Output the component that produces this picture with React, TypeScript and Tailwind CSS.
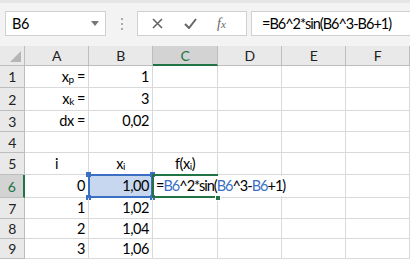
import React from 'react';

const cols = ['A', 'B', 'C', 'D', 'E', 'F'];
const rowHeights = ['h-[22px]', 'h-[23px]', 'h-[21px]', 'h-[21px]', 'h-[22px]', 'h-[23px]', 'h-[21px]', 'h-[20px]', 'h-[20px]'];

function Sub({ base, sub }: { base: string; sub: string }) {
    return (
        <span>
            {base}
            <sub className="text-[10px] relative top-[1px]">{sub}</sub>
        </span>
    );
}

// cell contents keyed by "row-col"
const cells: Record<string, { v: React.ReactNode; align: 'r' | 'c' }> = {
    '1-A': { v: <><Sub base="x" sub="p" />{'\u00a0'}=</>, align: 'r' },
    '1-B': { v: '1', align: 'r' },
    '2-A': { v: <><Sub base="x" sub="k" />{'\u00a0'}=</>, align: 'r' },
    '2-B': { v: '3', align: 'r' },
    '3-A': { v: 'dx =', align: 'r' },
    '3-B': { v: '0,02', align: 'r' },
    '5-A': { v: 'i', align: 'c' },
    '5-B': { v: <Sub base="x" sub="i" />, align: 'c' },
    '5-C': { v: <>f(<Sub base="x" sub="i" />)</>, align: 'c' },
    '6-A': { v: '0', align: 'r' },
    '6-B': { v: '1,00', align: 'r' },
    '7-A': { v: '1', align: 'r' },
    '7-B': { v: '1,02', align: 'r' },
    '8-A': { v: '2', align: 'r' },
    '8-B': { v: '1,04', align: 'r' },
    '9-A': { v: '3', align: 'r' },
    '9-B': { v: '1,06', align: 'r' },
};

function Formula() {
    const blue = 'text-[#3a6fc4]';
    return (
        <span className="whitespace-nowrap tracking-[-1px]">
            =<span className={blue}>B6</span>^2*sin(<span className={blue}>B6</span>^3-<span className={blue}>B6</span>+1)
        </span>
    );
}

function Handle({ className }: { className: string }) {
    return <div className={`absolute w-[5px] h-[5px] bg-[#3a6fc4] ${className}`} />;
}

export default function App() {
    return (
        <div className="w-[410px] h-[259px] overflow-hidden bg-white text-[14.5px] tracking-[-0.45px] text-black" style={{ fontFamily: 'Lato, "Liberation Sans", sans-serif' }}>
            {/* Formula bar */}
            <div className="h-[46px] bg-[#f3f3f3] border-t-[3px] border-[#e6e6e6] flex items-start pt-[8px] pl-[5px]">
                <div className="w-[101px] h-[25px] bg-white border border-[#d0d0d0] flex items-center justify-between pl-[6px] pr-[6px]">
                    <span>B6</span>
                    <svg width="8" height="5" viewBox="0 0 8 5"><path d="M0 0h8L4 5z" fill="#777" /></svg>
                </div>
                <div className="w-[31px] h-[25px] flex flex-col items-center justify-center gap-[3px]">
                    <div className="w-[2px] h-[2px] bg-[#aaa]" />
                    <div className="w-[2px] h-[2px] bg-[#aaa]" />
                    <div className="w-[2px] h-[2px] bg-[#aaa]" />
                </div>
                <div className="w-[110px] h-[25px] bg-white border border-[#d0d0d0] flex items-center">
                    <svg className="ml-[14px]" width="11" height="11" viewBox="0 0 11 11"><path d="M1 1l9 9M10 1l-9 9" stroke="#666" strokeWidth="1.6" /></svg>
                    <svg className="ml-[21px]" width="13" height="11" viewBox="0 0 13 11"><path d="M1 6l4 4 7-9" stroke="#666" strokeWidth="2" fill="none" /></svg>
                    <span className="ml-[20px] italic text-[#666] text-[14px] tracking-normal" style={{ fontFamily: '"Liberation Serif", serif' }}>f<span className="text-[11px]">x</span></span>
                </div>
                <div className="ml-[4px] flex-1 h-[25px] bg-white border border-[#d0d0d0] border-r-0 flex items-center pl-[10px] overflow-hidden">
                    <span className="whitespace-nowrap tracking-[-1px]">=B6^2*sin(B6^3-B6+1)</span>
                </div>
            </div>

            {/* Sheet */}
            <div className="grid grid-cols-[25px_64px_64px_65px_64px_64px_64px]">
                {/* header row */}
                <div className="h-[20px] bg-[#e9e9e9] border-r border-b border-[#bdbdbd] relative">
                    <svg className="absolute right-[3px] bottom-[3px]" width="11" height="11" viewBox="0 0 11 11"><path d="M11 0v11H0z" fill="#b5b5b5" /></svg>
                </div>
                {cols.map((c) => (
                    <div
                        key={c}
                        className={
                            c === 'C'
                                ? 'h-[20px] bg-[#d3d3d3] border-r border-[#bdbdbd] border-b-2 border-b-[#217346] flex items-center justify-center text-[14px] text-[#217346]'
                                : 'h-[20px] bg-[#e9e9e9] border-r border-b border-[#bdbdbd] flex items-center justify-center text-[14px] text-[#222]'
                        }
                    >
                        {c}
                    </div>
                ))}

                {rowHeights.map((h, i) => {
                    const r = i + 1;
                    return (
                        <React.Fragment key={r}>
                            <div
                                className={
                                    r === 6
                                        ? `${h} bg-[#d3d3d3] border-b border-[#bdbdbd] border-r-2 border-r-[#217346] flex items-center justify-center text-[14px] text-[#217346]`
                                        : `${h} bg-[#e9e9e9] border-r border-b border-[#bdbdbd] flex items-center justify-center text-[14px] text-[#222]`
                                }
                            >
                                {r}
                            </div>
                            {cols.map((c) => {
                                const cell = cells[`${r}-${c}`];
                                const isB6 = r === 6 && c === 'B';
                                const isC6 = r === 6 && c === 'C';
                                return (
                                    <div
                                        key={c}
                                        className={`${h} relative border-r border-b border-[#d9d9d9] flex items-center px-[3px] ${
                                            cell?.align === 'c' ? 'justify-center' : 'justify-end'
                                        } ${isB6 ? 'bg-[#c6d7ef]' : ''} ${isC6 ? 'z-10' : ''}`}
                                    >
                                        {cell?.v}
                                        {isB6 && (
                                            <>
                                                <div className="absolute -left-[1px] -top-[1px] -right-[1px] -bottom-[1px] border-2 border-[#3a6fc4]" />
                                                <Handle className="-left-[3px] -top-[3px]" />
                                                <Handle className="-right-[3px] -top-[3px]" />
                                                <Handle className="-left-[3px] -bottom-[3px]" />
                                                <Handle className="-right-[3px] -bottom-[3px]" />
                                            </>
                                        )}
                                        {isC6 && (
                                            <>
                                                <div className="absolute left-[3px] top-[1px] bottom-[1px] flex items-center bg-white pr-[1px]">
                                                    <Formula />
                                                </div>
                                                <div className="absolute -left-[1px] -top-[1px] -right-[1px] -bottom-[1px] border-t-2 border-b-2 border-l-2 border-[#217346]" />
                                                <div className="absolute -right-[4px] -bottom-[4px] w-[6px] h-[6px] bg-[#217346] border border-white" />
                                            </>
                                        )}
                                    </div>
                                );
                            })}
                        </React.Fragment>
                    );
                })}
            </div>
        </div>
    );
}
